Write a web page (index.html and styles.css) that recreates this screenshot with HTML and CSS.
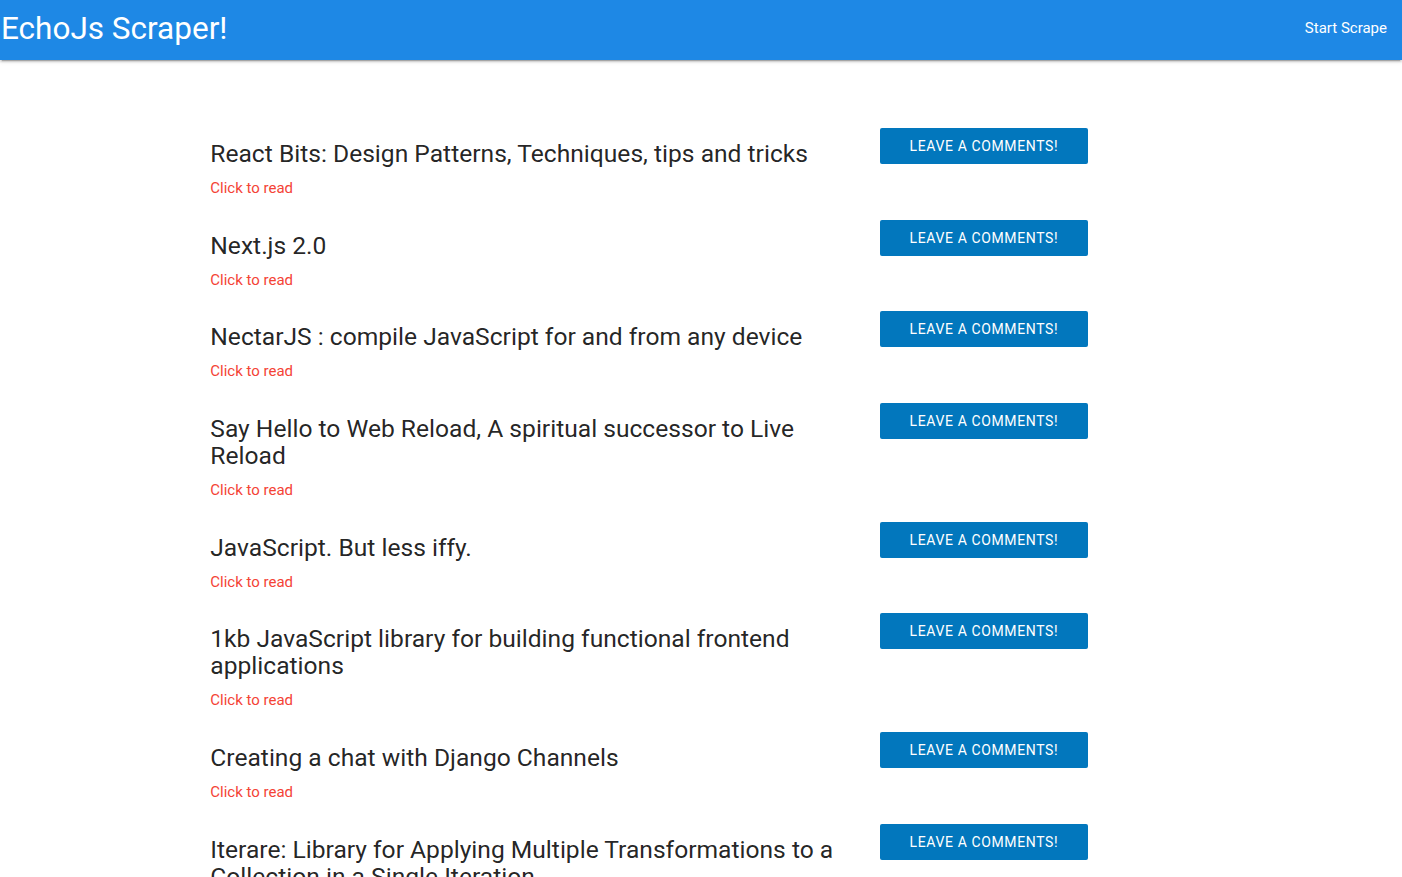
FILE: index.html
```html
<!DOCTYPE html>
<html>
<head>
<meta charset="utf-8">
<title>EchoJs Scraper!</title>
<link rel="stylesheet" href="styles.css">
</head>
<body>
<nav class="nav">
  <a class="brand" href="#">EchoJs Scraper!</a>
  <ul class="nav-links"><li><a href="#">Start Scrape</a></li></ul>
</nav>
<main class="container">
  <div class="row">
    <div class="col-main"><h5 class="title">React Bits: Design Patterns, Techniques, tips and tricks</h5><a class="read" href="#">Click to read</a></div>
    <div class="col-side"><a class="btn" href="#">Leave a comments!</a></div>
  </div>
  <div class="row">
    <div class="col-main"><h5 class="title">Next.js 2.0</h5><a class="read" href="#">Click to read</a></div>
    <div class="col-side"><a class="btn" href="#">Leave a comments!</a></div>
  </div>
  <div class="row">
    <div class="col-main"><h5 class="title">NectarJS : compile JavaScript for and from any device</h5><a class="read" href="#">Click to read</a></div>
    <div class="col-side"><a class="btn" href="#">Leave a comments!</a></div>
  </div>
  <div class="row">
    <div class="col-main"><h5 class="title">Say Hello to Web Reload, A spiritual successor to Live Reload</h5><a class="read" href="#">Click to read</a></div>
    <div class="col-side"><a class="btn" href="#">Leave a comments!</a></div>
  </div>
  <div class="row">
    <div class="col-main"><h5 class="title">JavaScript. But less iffy.</h5><a class="read" href="#">Click to read</a></div>
    <div class="col-side"><a class="btn" href="#">Leave a comments!</a></div>
  </div>
  <div class="row">
    <div class="col-main"><h5 class="title">1kb JavaScript library for building functional frontend applications</h5><a class="read" href="#">Click to read</a></div>
    <div class="col-side"><a class="btn" href="#">Leave a comments!</a></div>
  </div>
  <div class="row">
    <div class="col-main"><h5 class="title">Creating a chat with Django Channels</h5><a class="read" href="#">Click to read</a></div>
    <div class="col-side"><a class="btn" href="#">Leave a comments!</a></div>
  </div>
  <div class="row">
    <div class="col-main"><h5 class="title">Iterare: Library for Applying Multiple Transformations to a Collection in a Single Iteration</h5><a class="read" href="#">Click to read</a></div>
    <div class="col-side"><a class="btn" href="#">Leave a comments!</a></div>
  </div>
</main>
</body>
</html>
```
FILE: styles.css
```css
html { font-size: 15px; }
body {
  margin: 0;
  font-family: Roboto, "Liberation Sans", sans-serif;
  color: rgba(0,0,0,0.87);
  line-height: 1.5;
  background: #fff;
}
.nav {
  height: 60px;
  background: #1e88e5;
  display: flex;
  align-items: center;
  justify-content: space-between;
  box-shadow: 0 2px 2px 0 rgba(0,0,0,0.14), 0 1px 5px 0 rgba(0,0,0,0.12), 0 3px 1px -2px rgba(0,0,0,0.2);
}
.brand {
  color: #fff;
  text-decoration: none;
  font-size: 2.1rem;
  line-height: 58px;
  padding-left: 1px;
  align-self: flex-start;
}
.nav-links {
  list-style: none;
  margin: 0;
  padding: 0;
  display: flex;
  align-self: flex-start;
}
.nav-links a {
  display: block;
  color: #fff;
  text-decoration: none;
  font-size: 15px;
  padding: 0 15px;
  line-height: 56px;
}
.container {
  width: 70%;
  margin: 0 auto;
  padding-top: 68px;
}
.row {
  display: flex;
  margin: 0 -11.25px 19.9px;
}
.col-main {
  flex: 0 0 66.6667%;
  box-sizing: border-box;
  padding: 0 11.25px;
}
.col-side {
  flex: 0 0 33.3333%;
  box-sizing: border-box;
  padding: 0 11.25px;
}
.title {
  font-size: 1.64rem;
  font-weight: 400;
  line-height: 110%;
  margin: 12px 0 10px;
}
.read {
  display: block;
  color: #f44336;
  text-decoration: none;
  font-size: 15px;
  line-height: 22.7px;
}
.btn {
  display: inline-block;
  height: 36px;
  line-height: 36px;
  padding: 0 30px;
  background: #0277bd;
  color: #fff;
  text-decoration: none;
  text-transform: uppercase;
  font-size: 14px;
  letter-spacing: 0.62px;
  border-radius: 2px;
}
```
